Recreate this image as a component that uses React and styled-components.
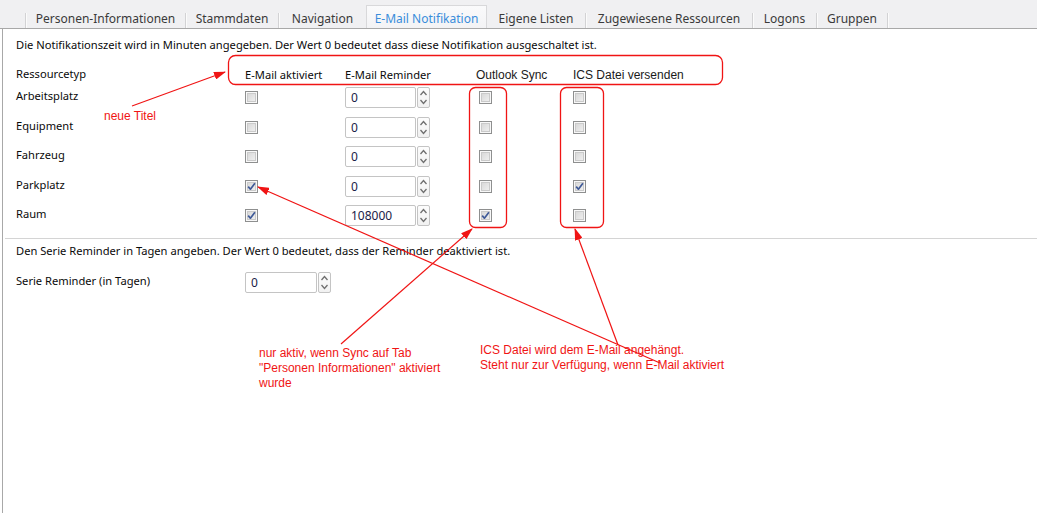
import React from "react";
import styled, { createGlobalStyle } from "styled-components";

const GlobalStyle = createGlobalStyle`
  html, body {
    margin: 0;
    padding: 0;
    background: #fff;
  }
  body {
    font-family: "Noto Sans", "Liberation Sans", sans-serif;
    font-size: 11.15px;
    color: #0a0a0a;
  }
`;

const Page = styled.div`
  position: relative;
  width: 1037px;
  height: 513px;
  overflow: hidden;
  display: flex;
  flex-direction: column;
`;

const TabBar = styled.div`
  height: 29px;
  box-sizing: border-box;
  background: #f0f0f2;
  border-bottom: 1px solid #a8a8a8;
  display: flex;
  align-items: flex-end;
  padding-left: 25px;
`;

const Tab = styled.div`
  width: ${(p) => p.$w}px;
  height: 23px;
  box-sizing: border-box;
  display: flex;
  align-items: center;
  justify-content: center;
  padding-top: 3px;
  font-size: 12px;
  color: ${(p) => (p.$active ? "#3a8ddb" : "#3a3a3a")};
  background: ${(p) =>
    p.$active ? "linear-gradient(#fafafb, #f3f3f5)" : "transparent"};
  border: ${(p) => (p.$active ? "1px solid #d8d8da" : "none")};
  border-bottom: none;
  white-space: nowrap;
`;

const TabSep = styled.div`
  width: 1px;
  height: 15px;
  background: #d2d2d4;
  box-shadow: 1px 0 0 #fbfbfb;
`;

const Panel = styled.div`
  flex: 1;
  margin-left: 2px;
  border-left: 1px solid #a8a8a8;
  padding-left: 13px;
  display: flex;
  flex-direction: column;
`;

const Hint = styled.div`
  height: 16px;
  line-height: 16px;
  margin-top: ${(p) => p.$top}px;
  white-space: nowrap;
`;

const Grid = styled.div`
  margin-top: 13px;
  display: grid;
  grid-template-columns: 229px 100px 131px 97px 1fr;
  grid-template-rows: 17px repeat(5, 29.5px);
  align-items: center;
`;

const HeadCell = styled.div`
  align-self: ${(p) => (p.$first ? "start" : "end")};
  line-height: 16px;
  white-space: nowrap;
  font-family: ${(p) =>
    p.$pasted ? '"Liberation Sans", Arial, sans-serif' : "inherit"};
  font-size: ${(p) => (p.$pasted ? "12px" : "inherit")};
  color: ${(p) => (p.$pasted ? "#1a1a1a" : "inherit")};
`;

const Label = styled.div`
  line-height: 16px;
  padding-bottom: 3px;
  white-space: nowrap;
`;

const Cell = styled.div`
  display: flex;
  align-items: center;
  padding-left: ${(p) => p.$indent || 0}px;
`;

const Box = styled.span`
  width: 13px;
  height: 13px;
  box-sizing: border-box;
  border: 1px solid #8e8f8f;
  background: linear-gradient(135deg, #d3d3d3, #f4f4f4);
  box-shadow: inset 0 0 0 1px #f8f8f8, inset 0 0 0 2px #cacaca;
  display: inline-flex;
  align-items: center;
  justify-content: center;
`;

const Spin = styled.div`
  display: flex;
  gap: 1px;
  height: 21px;
`;

const SpinInput = styled.div`
  width: ${(p) => p.$w}px;
  box-sizing: border-box;
  border: 1px solid #c4c4c4;
  border-radius: 2px;
  background: #fff;
  padding-left: 5px;
  display: flex;
  align-items: center;
  font-size: 12px;
  color: #1b1b48;
`;

const SpinButtons = styled.div`
  width: 13px;
  box-sizing: border-box;
  border: 1px solid #c4c4c4;
  border-radius: 2px;
  background: linear-gradient(#fdfdfd, #f1f1f1);
  display: flex;
  align-items: center;
  justify-content: center;
`;

const Divider = styled.div`
  height: 1px;
  background: #d4d4d4;
  margin: 7px 0 0 -11px;
`;

const SerieRow = styled.div`
  margin-top: 13px;
  display: grid;
  grid-template-columns: 229px auto;
  align-items: center;
  height: 21px;
`;

const Overlay = styled.svg`
  position: absolute;
  left: 0;
  top: 0;
  pointer-events: none;
`;

const Note = styled.div`
  position: absolute;
  left: ${(p) => p.$x}px;
  top: ${(p) => p.$y}px;
  font-family: "Liberation Sans", Arial, sans-serif;
  font-size: 12px;
  line-height: 15px;
  color: #f01414;
  white-space: nowrap;
`;

const tabs = [
  { t: "Personen-Informationen", w: 159 },
  { t: "Stammdaten", w: 92 },
  { t: "Navigation", w: 87 },
  { t: "E-Mail Notifikation", w: 121, active: true },
  { t: "Eigene Listen", w: 98 },
  { t: "Zugewiesene Ressourcen", w: 166 },
  { t: "Logons", w: 63 },
  { t: "Gruppen", w: 70 },
];

const rows = [
  { name: "Arbeitsplatz", mail: false, rem: "0", sync: false, ics: false },
  { name: "Equipment", mail: false, rem: "0", sync: false, ics: false },
  { name: "Fahrzeug", mail: false, rem: "0", sync: false, ics: false },
  { name: "Parkplatz", mail: true, rem: "0", sync: false, ics: true },
  { name: "Raum", mail: true, rem: "108000", sync: true, ics: false },
];

const Check = ({ on }) => (
  <Box>
    {on && (
      <svg width="9" height="9" viewBox="0 0 9 9">
        <path
          d="M1.2 4.6 L3.4 7.2 L7.9 1.2"
          fill="none"
          stroke="#3f5a98"
          strokeWidth="1.7"
          strokeLinejoin="round"
        />
      </svg>
    )}
  </Box>
);

const SpinBox = ({ value, w }) => (
  <Spin>
    <SpinInput $w={w}>{value}</SpinInput>
    <SpinButtons>
      <svg width="9" height="17" viewBox="0 0 9 17">
        <path d="M1.5 6 L4.5 2.5 L7.5 6" fill="none" stroke="#6f6f6f" strokeWidth="1.3" />
        <path d="M1.5 11 L4.5 14.5 L7.5 11" fill="none" stroke="#6f6f6f" strokeWidth="1.3" />
      </svg>
    </SpinButtons>
  </Spin>
);

const Arrow = ({ x1, y1, x2, y2 }) => (
  <line x1={x1} y1={y1} x2={x2} y2={y2} stroke="#f01414" strokeWidth="1.2" markerEnd="url(#head)" />
);

export default function App() {
  return (
    <Page>
      <GlobalStyle />
      <TabBar>
        {tabs.map((tab, i) => (
          <React.Fragment key={tab.t}>
            {!tab.active && !(i > 0 && tabs[i - 1].active) && <TabSep />}
            <Tab $w={tab.w} $active={tab.active}>
              {tab.t}
            </Tab>
          </React.Fragment>
        ))}
        <TabSep />
      </TabBar>
      <Panel>
        <Hint $top={8}>
          Die Notifikationszeit wird in Minuten angegeben. Der Wert 0 bedeutet dass diese Notifikation ausgeschaltet ist.
        </Hint>
        <Grid>
          <HeadCell $first>Ressourcetyp</HeadCell>
          <HeadCell>E-Mail aktiviert</HeadCell>
          <HeadCell>E-Mail Reminder</HeadCell>
          <HeadCell $pasted>Outlook Sync</HeadCell>
          <HeadCell $pasted>ICS Datei versenden</HeadCell>
          {rows.map((r) => (
            <React.Fragment key={r.name}>
              <Label>{r.name}</Label>
              <Cell>
                <Check on={r.mail} />
              </Cell>
              <Cell>
                <SpinBox value={r.rem} w={71} />
              </Cell>
              <Cell $indent={3}>
                <Check on={r.sync} />
              </Cell>
              <Cell>
                <Check on={r.ics} />
              </Cell>
            </React.Fragment>
          ))}
        </Grid>
        <Divider />
        <Hint $top={4}>
          Den Serie Reminder in Tagen angeben. Der Wert 0 bedeutet, dass der Reminder deaktiviert ist.
        </Hint>
        <SerieRow>
          <Label>Serie Reminder (in Tagen)</Label>
          <SpinBox value="0" w={72} />
        </SerieRow>
      </Panel>

      <Overlay width="1037" height="513" viewBox="0 0 1037 513">
        <defs>
          <marker id="head" markerWidth="12" markerHeight="8" refX="11" refY="4" orient="auto" markerUnits="userSpaceOnUse">
            <path d="M0 0 L12 4 L0 8 Z" fill="#f01414" />
          </marker>
        </defs>
        <rect x="228.5" y="55.5" width="494" height="29" rx="7" fill="none" stroke="#f01414" strokeWidth="1.3" />
        <rect x="469.5" y="87.5" width="37" height="140" rx="6" fill="none" stroke="#f01414" strokeWidth="1.3" />
        <rect x="560.5" y="87.5" width="43" height="140" rx="6" fill="none" stroke="#f01414" strokeWidth="1.3" />
        <Arrow x1={132} y1={106} x2={225} y2={72} />
        <Arrow x1={341} y1={344} x2={472} y2={229} />
        <Arrow x1={618} y1={345} x2={575} y2={229} />
        <Arrow x1={660} y1={363} x2={258} y2={187} />
      </Overlay>
      <Note $x={104} $y={109}>neue Titel</Note>
      <Note $x={259} $y={346}>
        nur aktiv, wenn Sync auf Tab
        <br />
        "Personen Informationen" aktiviert
        <br />
        wurde
      </Note>
      <Note $x={480} $y={343}>
        ICS Datei wird dem E-Mail angehängt.
        <br />
        Steht nur zur Verfügung, wenn E-Mail aktiviert
      </Note>
    </Page>
  );
}
